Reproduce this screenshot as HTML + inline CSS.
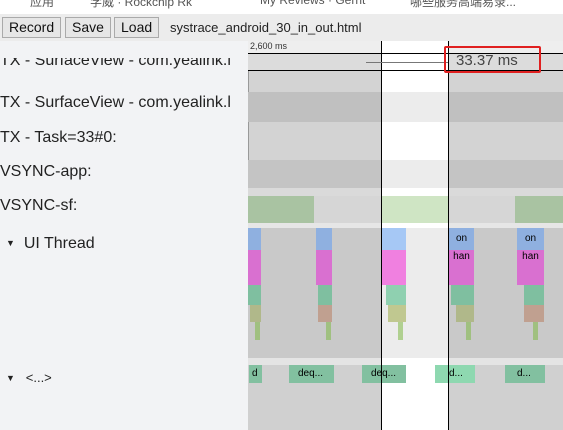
<!DOCTYPE html><html><head><style>
body{margin:0;width:563px;height:430px;overflow:hidden;position:relative;font-family:"Liberation Sans",sans-serif;background:#f2f3f5}
div{position:absolute;box-sizing:border-box}
.t{font-size:16px;color:#222;white-space:nowrap}
.btn{top:17px;height:21px;border:1px solid #aaa;background:#e6e6e6;font-size:14px;line-height:19px;padding:0 6px;color:#111}
.r{left:248px;width:315px}
</style></head><body>
<div style="left:0;top:0;width:563px;height:14px;background:#fff;font-size:12px;color:#555;overflow:hidden"><span style="position:absolute;left:30px;top:-7px">应用</span><span style="position:absolute;left:90px;top:-7px">学威 · Rockchip Rk</span><span style="position:absolute;left:260px;top:-7px">My Reviews · Gerrit</span><span style="position:absolute;left:410px;top:-7px">哪些服务高端易录...</span></div>
<div style="left:0;top:14px;width:563px;height:27px;background:#ececec"></div>
<div class="btn" style="left:2px">Record</div>
<div class="btn" style="left:65px">Save</div>
<div class="btn" style="left:114px">Load</div>
<div class="t" style="left:170px;top:20px;font-size:13px">systrace_android_30_in_out.html</div>
<div style="left:0;top:41px;width:248px;height:389px;background:#f2f3f5"></div>
<div class="t" style="left:0;top:58px;height:14px;overflow:hidden;line-height:6px">TX - SurfaceView - com.yealink.l</div>
<div class="t" style="left:0;top:94px">TX - SurfaceView - com.yealink.l</div>
<div class="t" style="left:0;top:129px">TX - Task=33#0:</div>
<div class="t" style="left:0;top:163px">VSYNC-app:</div>
<div class="t" style="left:0;top:197px">VSYNC-sf:</div>
<div class="t" style="left:6px;top:235px"><span style="font-size:9px;vertical-align:2px">▼</span>&nbsp; UI Thread</div>
<div class="t" style="left:6px;top:370px;font-size:13px"><span style="font-size:9px;vertical-align:1px">▼</span>&nbsp;&nbsp; &lt;...&gt;</div>
<div class="r" style="top:41px;height:389px;background:#d3d3d3;border-left:1px solid #999"></div>
<div class="r" style="top:41px;height:13px;background:#eee;font-size:9px;color:#333;padding-left:2px">2,600 ms</div>
<div class="r" style="top:53px;height:18px;background:#dcdcdc"></div>
<div class="r" style="top:92px;height:30px;background:#c0c0c0"></div>
<div class="r" style="top:160px;height:28px;background:#c4c4c4"></div>
<div class="r" style="top:188px;height:8px;background:#dadada"></div>
<div class="r" style="top:196px;height:28px;background:#d6d6d6"></div>
<div style="left:248px;top:196px;width:66px;height:27px;background:#a9c3a2"></div>
<div style="left:515px;top:196px;width:48px;height:27px;background:#a9c3a2"></div>
<div class="r" style="top:223px;height:5px;background:#e6e6e6"></div>
<div class="r" style="top:228px;height:130px;background:#c9c9c9"></div>
<div class="r" style="top:358px;height:7px;background:#e4e4e4"></div>
<div class="r" style="top:365px;height:65px;background:#d0d0d0"></div>
<div style="left:382px;top:41px;width:66px;height:389px;background:#fff"></div>
<div style="left:382px;top:92px;width:66px;height:30px;background:#ececec"></div>
<div style="left:382px;top:160px;width:66px;height:28px;background:#ececec"></div>
<div style="left:382px;top:196px;width:66px;height:27px;background:#cfe5c4"></div>
<div style="left:382px;top:228px;width:66px;height:130px;background:#ececec"></div>
<div style="left:248px;top:53px;width:315px;height:1px;background:#000"></div>
<div style="left:248px;top:70px;width:315px;height:1px;background:#000"></div>
<div style="left:248px;top:228px;width:13px;height:22px;background:#8fb0e0"></div><div style="left:248px;top:250px;width:13px;height:35px;background:#d970d0"></div><div style="left:248px;top:285px;width:13px;height:20px;background:#7fbfa0"></div><div style="left:250px;top:305px;width:11px;height:17px;background:#b0b88a"></div><div style="left:255px;top:322px;width:5px;height:18px;background:#a0c080"></div>
<div style="left:316px;top:228px;width:16px;height:22px;background:#8fb0e0"></div><div style="left:316px;top:250px;width:16px;height:35px;background:#d970d0"></div><div style="left:318px;top:285px;width:14px;height:20px;background:#7fbfa0"></div><div style="left:318px;top:305px;width:14px;height:17px;background:#c0a090"></div><div style="left:326px;top:322px;width:5px;height:18px;background:#a0c080"></div>
<div style="left:382px;top:228px;width:24px;height:22px;background:#a6c8f5"></div><div style="left:382px;top:250px;width:24px;height:35px;background:#f080e0"></div><div style="left:386px;top:285px;width:20px;height:20px;background:#8fd0b0"></div><div style="left:388px;top:305px;width:18px;height:17px;background:#c0c890"></div><div style="left:398px;top:322px;width:5px;height:18px;background:#b0d090"></div>
<div style="left:449px;top:228px;width:25px;height:22px;background:#8fb0e0;font-size:10px;text-align:center;line-height:22px">on</div><div style="left:449px;top:250px;width:25px;height:35px;background:#d970d0;font-size:10px;text-align:center;line-height:14px">han</div><div style="left:451px;top:285px;width:23px;height:20px;background:#7fbfa0"></div><div style="left:456px;top:305px;width:18px;height:17px;background:#b0b88a"></div><div style="left:466px;top:322px;width:5px;height:18px;background:#a0c080"></div>
<div style="left:517px;top:228px;width:27px;height:22px;background:#8fb0e0;font-size:10px;text-align:center;line-height:22px">on</div><div style="left:517px;top:250px;width:27px;height:35px;background:#d970d0;font-size:10px;text-align:center;line-height:14px">han</div><div style="left:524px;top:285px;width:20px;height:20px;background:#7fbfa0"></div><div style="left:524px;top:305px;width:20px;height:17px;background:#c0a090"></div><div style="left:533px;top:322px;width:5px;height:18px;background:#a0c080"></div>
<div style="left:249px;top:365px;width:13px;height:18px;background:#82c0a0;font-size:10px;padding-left:3px;line-height:18px">d</div>
<div style="left:289px;top:365px;width:45px;height:18px;background:#82c0a0;font-size:10px;padding-left:9px;line-height:18px">deq...</div>
<div style="left:362px;top:365px;width:44px;height:18px;background:#82c0a0;font-size:10px;padding-left:9px;line-height:18px">deq...</div>
<div style="left:435px;top:365px;width:40px;height:18px;background:#8ed8b0;font-size:10px;padding-left:14px;line-height:18px">d...</div>
<div style="left:505px;top:365px;width:40px;height:18px;background:#82c0a0;font-size:10px;padding-left:12px;line-height:18px">d...</div>
<div style="left:381px;top:41px;width:1px;height:389px;background:#000"></div>
<div style="left:448px;top:41px;width:1px;height:389px;background:#000"></div>
<div style="left:366px;top:62px;width:82px;height:1px;background:#777"></div>
<div style="left:456px;top:52px;color:#444;font-size:15px">33.37 ms</div>
<div style="left:444px;top:46px;width:97px;height:27px;border:2px solid #e02020;border-radius:2px"></div>
</body></html>
